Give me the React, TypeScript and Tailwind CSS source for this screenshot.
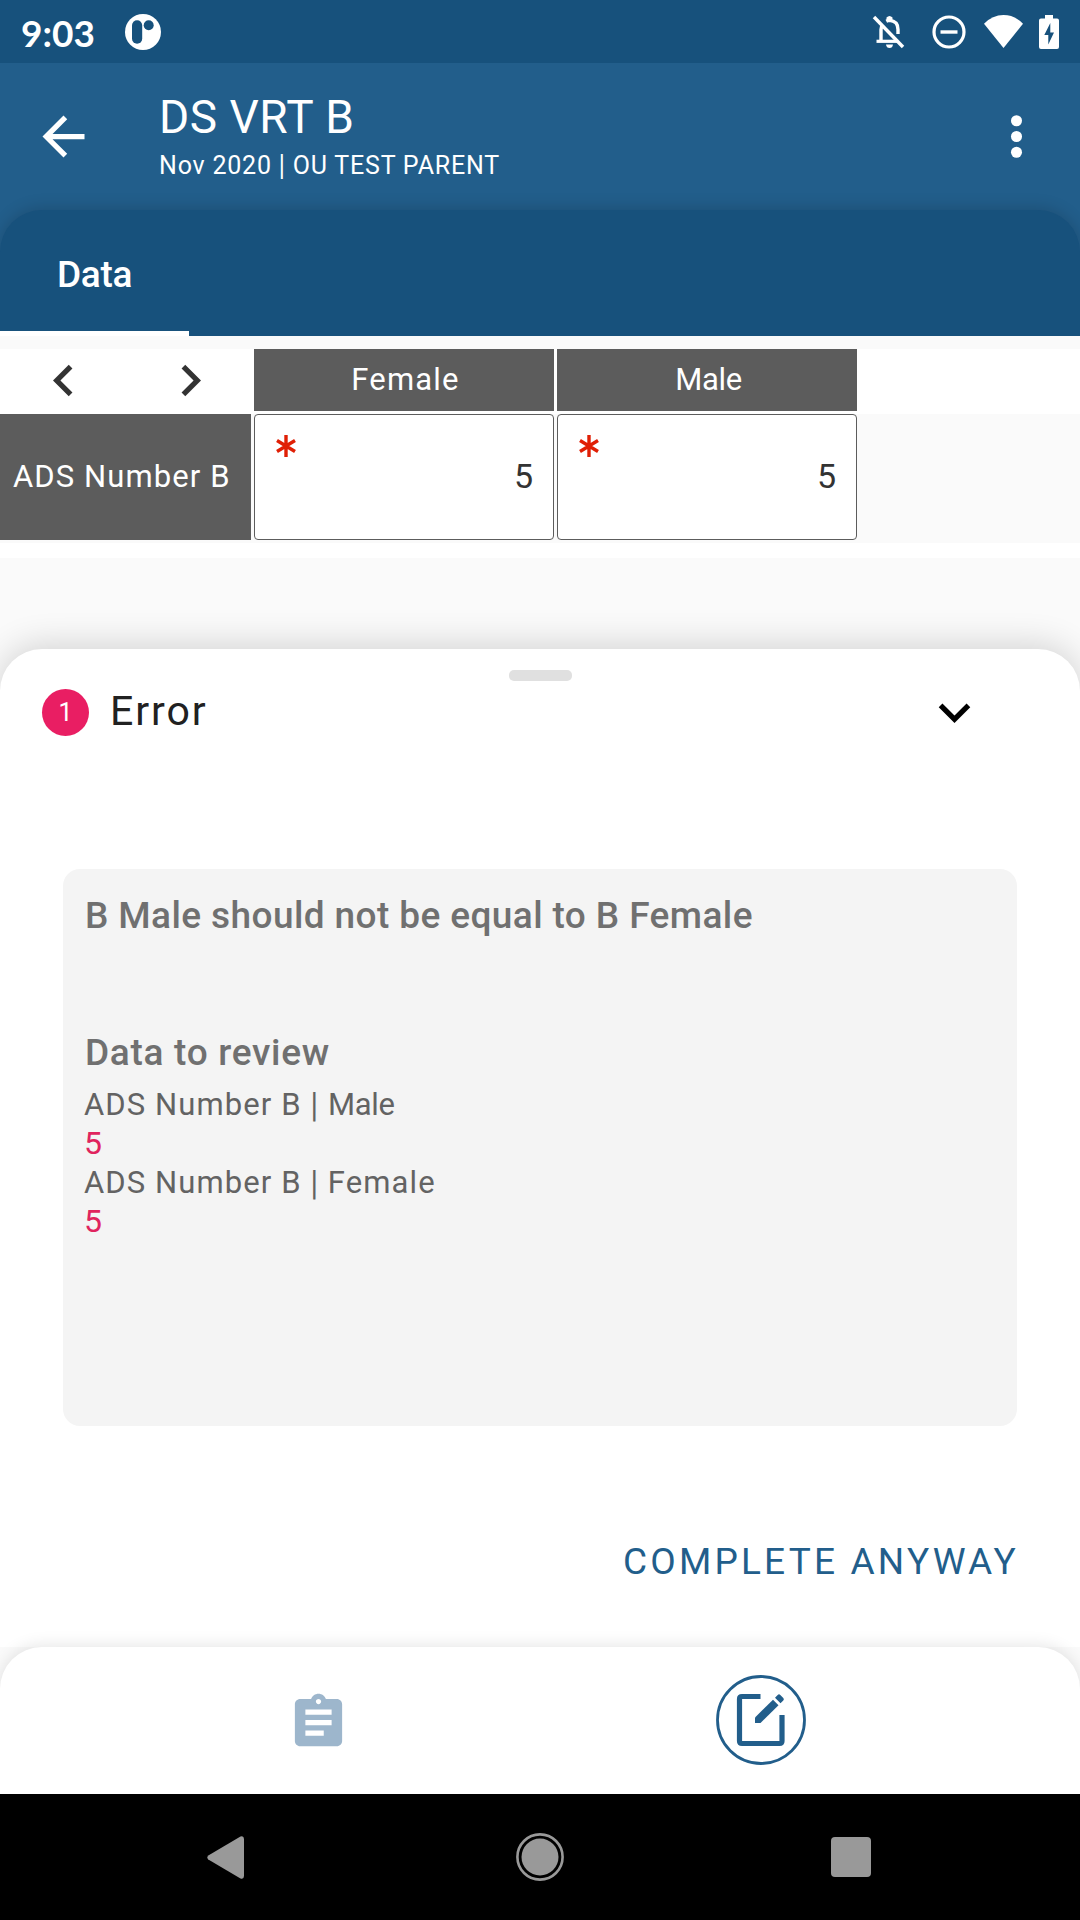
import type { ReactNode } from "react";

function Icon({ className = "", children }: { className?: string; children: ReactNode }) {
  return (
    <svg viewBox="0 0 24 24" className={`size-[63px] shrink-0 ${className}`} fill="currentColor">
      {children}
    </svg>
  );
}

function Bar({ className = "" }: { className?: string }) {
  return <span className={`inline-block scale-y-[1.15] ${className}`}>|</span>;
}

function StatusBar() {
  return (
    <div className="flex h-[63px] items-center bg-[#17517c] text-white">
      <span className="ml-[21px] w-[104px] pt-[2px] font-['Lato'] text-[37px] font-bold leading-none tracking-[0px]">
        9:03
      </span>
      <svg viewBox="0 0 36 36" className="size-[36px]">
        <circle cx="18" cy="18" r="18" fill="#fff" />
        <rect x="7" y="6.3" width="10.2" height="23.5" rx="5.1" fill="#17517c" />
        <circle cx="23.7" cy="11.3" r="5" fill="#17517c" />
      </svg>
      <div className="ml-auto mr-[21px] flex items-center">
        <svg viewBox="0 0 32 34" className="mr-[27px] h-[34px] w-[33px]" fill="none" stroke="#fff">
          <path d="M1.5 2 L30.5 32" strokeWidth="3.4" />
          <path d="M4 26.3H25" strokeWidth="3.2" />
          <path d="M8.5 26V14.5Q8.7 11.5 10.2 9.6" strokeWidth="3.4" />
          <path d="M13.8 6.3Q15.5 5.4 17 5.4Q25.500 6 25.500 14.500V19" strokeWidth="3.4" />
          <path d="M14 5.500V2.500Q17-.5 20 2.500V5.500" fill="#fff" stroke="none" />
          <path d="M13.500 29.500H20.500Q20 33 17 33T13.500 29.500" fill="#fff" stroke="none" />
        </svg>
        <svg viewBox="0 0 34 34" className="mr-[18px] size-[34px]" fill="none" stroke="#fff">
          <circle cx="17" cy="17" r="15" strokeWidth="3.2" />
          <path d="M8.500 17H25.500" strokeWidth="3.4" />
        </svg>
        <svg viewBox="0 0 39 33" className="mr-[16px] h-[33px] w-[39px]" fill="#fff">
          <path d="M0 8.700Q8.500 0 19.500 0T39 8.700L19.500 33Z" />
        </svg>
        <svg viewBox="0 0 20 34" className="h-[34px] w-[20px]" fill="#fff">
          <path d="M6 0H14V3.500H18Q20 3.500 20 5.500V32Q20 34 18 34H2Q0 34 0 32V5.500Q0 3.500 2 3.500H6Z" />
          <path d="M11.300 8L5.300 20H9.300V29.500L15 17.500H11.300Z" fill="#17517c" />
        </svg>
      </div>
    </div>
  );
}

function Toolbar() {
  return (
    <div className="flex h-[147px] items-center bg-[#225e8b] text-white">
      <Icon className="ml-[32px]">
        <path d="M20 11H7.83l5.59-5.59L12 4l-8 8 8 8 1.41-1.41L7.83 13H20v-2z" />
      </Icon>
      <div className="ml-[64px] flex flex-col pb-[2px]">
        <h1 className="text-[46px] leading-[54px] tracking-[0.5px]">DS VRT B</h1>
        <p className="mt-[7px] whitespace-nowrap text-[25px] leading-[30px] tracking-[0.8px]">
          Nov 2020 <Bar /> OU TEST PARENT
        </p>
      </div>
      <Icon className="ml-auto mr-[32px]">
        <circle cx="12" cy="6" r="2.1" />
        <circle cx="12" cy="12" r="2.1" />
        <circle cx="12" cy="18" r="2.1" />
      </Icon>
    </div>
  );
}

function TabBar() {
  return (
    <div className="bg-[#225e8b]">
      <div className="flex h-[126px] items-end rounded-t-[42px] bg-[#17517c] shadow-[0_-2px_16px_rgba(0,0,0,0.16)]">
        <div className="flex h-full w-[189px] flex-col text-white">
          <span className="flex flex-1 items-center justify-center pt-[8px] text-[37px] font-medium tracking-[-0.3px]">
            Data
          </span>
          <span className="h-[5px] bg-white" />
        </div>
      </div>
    </div>
  );
}

function ValueCell() {
  return (
    <div className="flex h-[126px] w-[300px] items-start rounded-[4px] border border-[#5c5c5c] bg-white pl-[21px] pr-[20px]">
      <svg viewBox="0 0 20 22" className="mt-[20px] h-[22px] w-[20px]" stroke="#e01f05" strokeWidth="3.4">
        <path d="M10 0V22M1 5.5L19 16.500M19 5.500L1 16.500" />
      </svg>
      <span className="ml-auto self-center pb-[2px] text-[34px] leading-none text-[#333]">5</span>
    </div>
  );
}

function DataTable() {
  return (
    <div className="bg-[#fafafa] pt-[13px] text-[31px]">
      <div className="flex h-[65px] bg-white">
        <div className="flex w-[254px] pl-[32px] text-[#333]">
          <Icon>
            <path d="M15.41 7.41L14 6l-6 6 6 6 1.41-1.41L10.83 12z" />
          </Icon>
          <Icon className="ml-[64px]">
            <path d="M10 6L8.59 7.41 13.17 12l-4.58 4.59L10 18l6-6z" />
          </Icon>
        </div>
        <div className="flex h-[62px] gap-[3px] text-white">
          <div className="flex w-[300px] items-center justify-center bg-[#5c5c5c] pl-[3px] tracking-[1.2px]">Female</div>
          <div className="flex w-[300px] items-center justify-center bg-[#5c5c5c] pl-[3px] tracking-[-0.3px]">Male</div>
        </div>
      </div>
      <div className="flex h-[129px] gap-[3px]">
        <div className="flex h-[126px] w-[251px] items-center whitespace-nowrap bg-[#5c5c5c] pl-[13px] tracking-[1.1px] text-white">
          ADS Number B
        </div>
        <ValueCell />
        <ValueCell />
      </div>
      <div className="h-[15px] bg-white" />
    </div>
  );
}

function ErrorSheet() {
  return (
    <div className="[clip-path:inset(-60px_0_0_0)]">
      <section className="flex h-[998px] flex-col rounded-t-[42px] bg-white shadow-[0_-4px_34px_rgba(0,0,0,0.16)]">
        <div className="mt-[21px] h-[11px] w-[63px] self-center rounded-[5px] bg-[#e0e0e0]" />
        <div className="flex h-[63px] items-center pl-[42px] pr-[94px]">
          <span className="flex size-[47px] items-center justify-center rounded-full bg-[#e91e63] text-[25px] text-white">1</span>
          <h2 className="ml-[21px] pb-[2px] text-[41px] leading-none tracking-[1.9px] text-[#212121]">Error</h2>
          <Icon className="ml-auto text-black">
            <path d="M7.41 8.59L12 13.17l4.59-4.58L18 10l-6 6-6-6z" />
          </Icon>
        </div>
        <div className="mx-[63px] mt-[125px] flex h-[557px] flex-col rounded-[17px] bg-[#f4f4f4] px-[21px] pt-[25px] text-[#636363]">
          <h3 className="pl-px text-[37px] font-medium leading-[44px] tracking-[0.4px] text-[#707070]">
            B Male should not be equal to B Female
          </h3>
          <h3 className="mt-[93px] pl-px text-[37px] font-medium leading-[44px] tracking-[0.7px] text-[#707070]">
            Data to review
          </h3>
          <div className="mt-[10px] text-[31px] leading-[39px]">
            <p className="tracking-[1.1px]">
              ADS Number B <Bar /> <span className="tracking-[-0.3px]">Male</span>
            </p>
            <p className="text-[32px] text-[#e0245e]">5</p>
            <p className="tracking-[1.1px]">
              ADS Number B <Bar /> Female
            </p>
            <p className="text-[32px] text-[#e0245e]">5</p>
          </div>
        </div>
        <button className="mr-[61px] mt-[114px] self-end text-[37px] leading-[44px] tracking-[3.2px] text-[#225e8b]">
          COMPLETE ANYWAY
        </button>
      </section>
    </div>
  );
}

function BottomBar() {
  return (
    <div className="relative flex h-[147px] rounded-t-[42px] bg-white pl-[287px] shadow-[0_-2px_16px_rgba(0,0,0,0.1)]">
      <Icon className="mt-[44px] text-[#9db6cc]">
        <path d="M19 3h-4.18C14.4 1.84 13.3 1 12 1s-2.4.84-2.82 2H5c-1.1 0-2 .9-2 2v14c0 1.1.9 2 2 2h14c1.1 0 2-.9 2-2V5c0-1.1-.9-2-2-2zm-7 0c.55 0 1 .45 1 1s-.45 1-1 1-1-.45-1-1 .45-1 1-1zm2 14H7v-2h7v2zm3-4H7v-2h10v2zm0-4H7V7h10v2z" />
      </Icon>
      <svg viewBox="0 0 90 90" className="ml-[366px] mt-[28px] size-[90px] text-[#225e8b]" fill="none" stroke="currentColor">
        <circle cx="45" cy="45" r="43.5" strokeWidth="2.8" />
        <path d="M44.5 21.500H26Q23.500 21.500 23.500 24V66Q23.500 68.500 26 68.500H63.500Q66 68.500 66 66V40" strokeWidth="5.2" />
        <path d="M39 48V42.500L57 24.700L62.500 30.200L44.500 48Z" fill="currentColor" stroke="none" />
        <path d="M59 22.700L61.700 20Q63 18.700 64.300 20L67.300 23Q68.500 24.300 67.300 25.500L64.500 28.200Z" fill="currentColor" stroke="none" />
      </svg>
    </div>
  );
}

function SystemNav() {
  return (
    <div className="flex h-[126px] items-center bg-black text-[#999]">
      <svg viewBox="0 0 37 43" className="ml-[207px] h-[43px] w-[37px]" fill="currentColor">
        <path d="M33.5 .6Q36.8-.6 37 3V40Q36.800 43.600 33.500 42.400L1.300 23.400Q-.6 21.500 1.300 19.600Z" />
      </svg>
      <svg viewBox="0 0 48 48" className="ml-[272px] size-[48px]">
        <circle cx="24" cy="24" r="22.6" fill="none" stroke="currentColor" strokeWidth="2.6" />
        <circle cx="24" cy="24" r="18.5" fill="currentColor" />
      </svg>
      <span className="ml-[267px] size-[40px] rounded-[4px] bg-[#999]" />
    </div>
  );
}

export default function App() {
  return (
    <div className="flex h-[1920px] w-[1080px] flex-col overflow-hidden bg-[#fafafa] font-['Roboto',sans-serif]">
      <StatusBar />
      <Toolbar />
      <TabBar />
      <DataTable />
      <div className="mt-[91px] bg-[#fafafa]">
        <ErrorSheet />
        <BottomBar />
      </div>
      <SystemNav />
    </div>
  );
}
